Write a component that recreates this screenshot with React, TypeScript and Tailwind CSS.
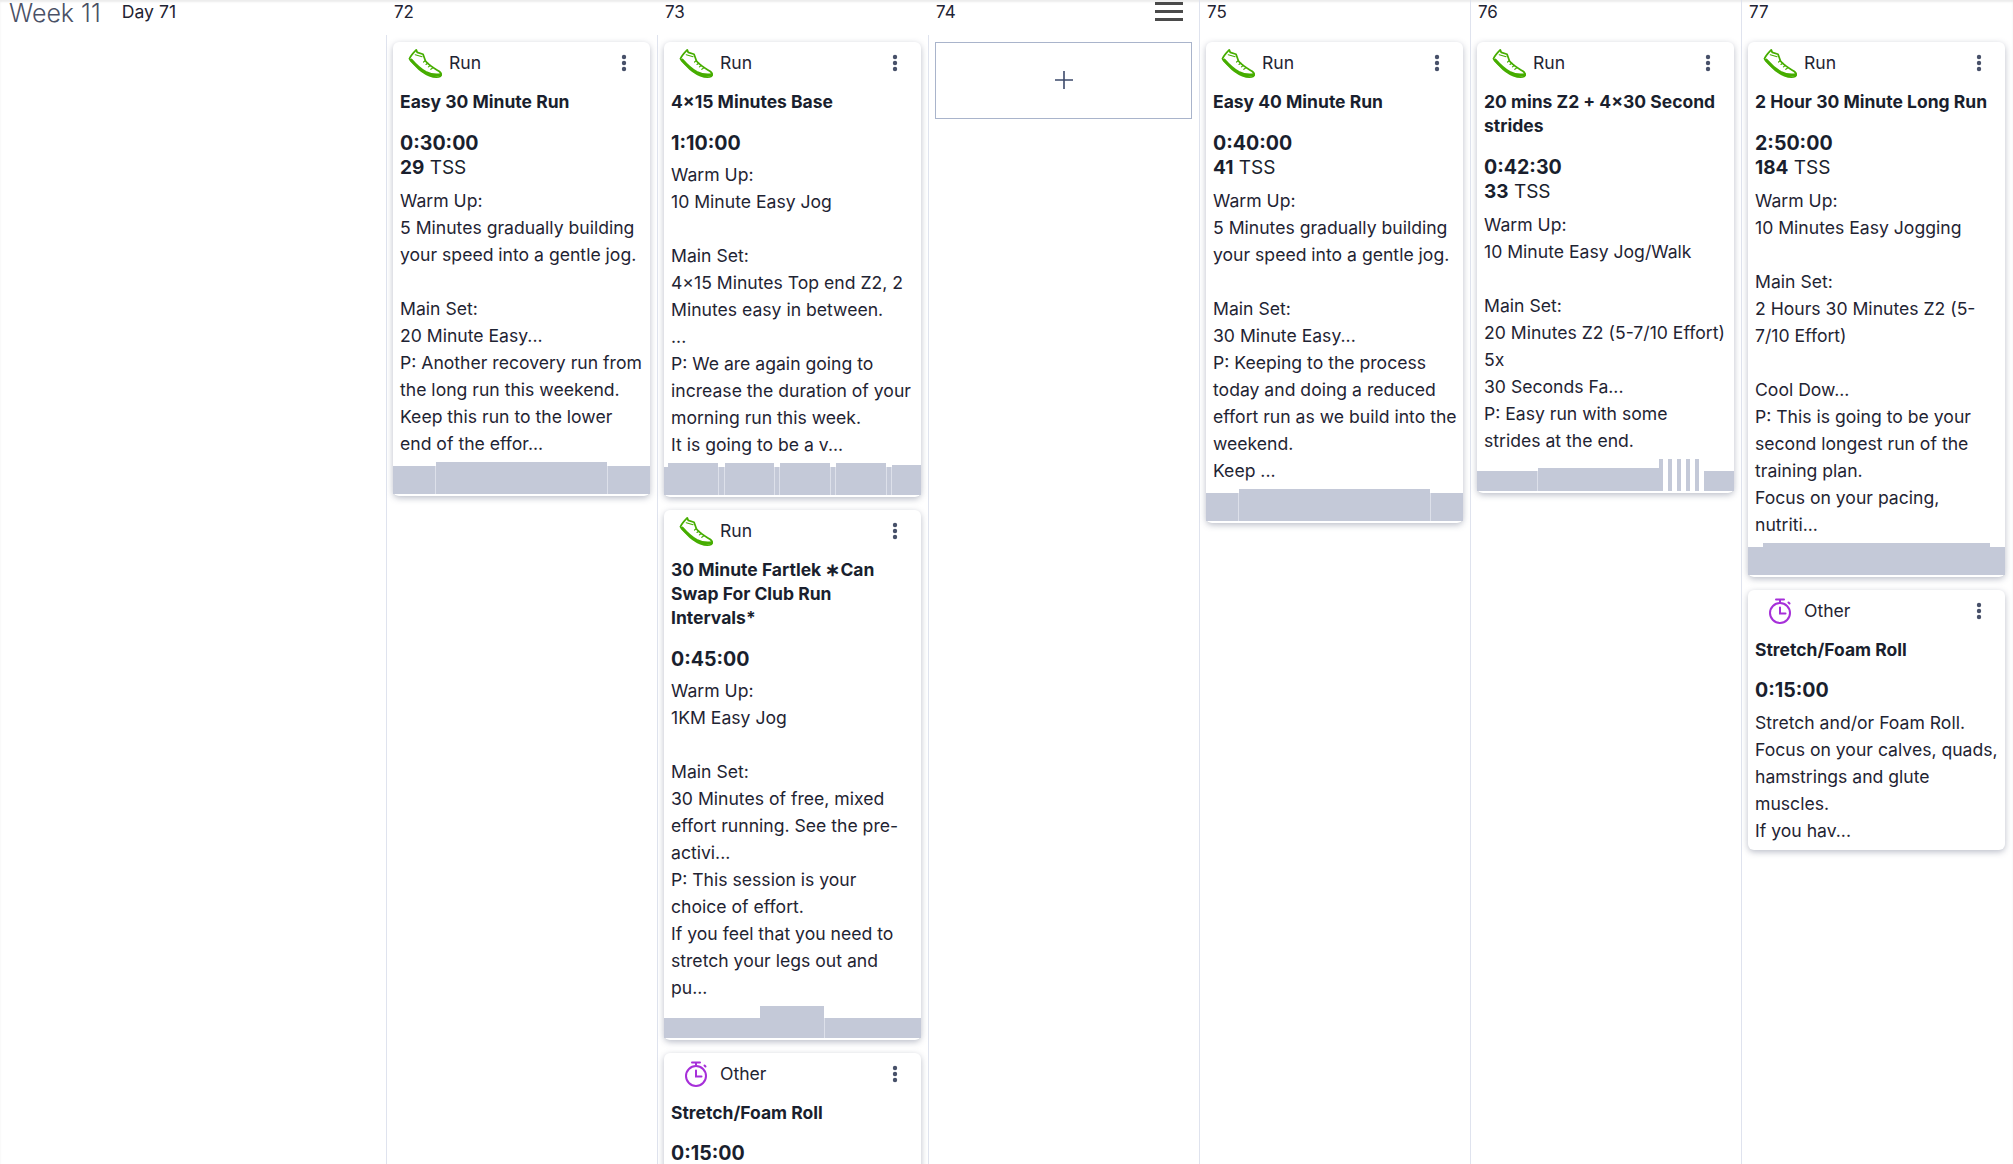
const FONT = "font-['Inter','Noto_Sans',sans-serif]";

type Seg = [number, number, boolean?];

function Shoe() {
  return (
    <svg width="35" height="31" viewBox="0 0 35 31" fill="none" stroke="#46ad00" strokeWidth="1.8" strokeLinejoin="round" strokeLinecap="round">
      <path d="M8.5 1.5 L9.5 4 L15.5 6 L18 13 C22 18 28 21 32 23.5 C34 25 34.5 27 33.5 28.5 C31 30 26 29.5 22 28 C17 26 12 22.5 8 18 C5 15 2 12.5 1.5 10.5 C3 7 6 4 8.5 1.5 Z" />
      <path d="M3.5 12 C7 16 12 21 18 24.5 C23 27 28 28 33.5 27" strokeWidth="3" />
      <path d="M7.5 6.5 L14.5 8.5" strokeWidth="1.2" />
      <path d="M18 12.5 L16 14 M20.5 15 L18.5 16.5 M23 17.5 L21 19 M25.5 20 L23.5 21.5" strokeWidth="1.2" />
    </svg>
  );
}

function Stopwatch() {
  return (
    <svg width="24" height="26" viewBox="0 0 24 26" fill="none" stroke="#a62fd9" strokeWidth="2" strokeLinecap="round">
      <circle cx="12" cy="15" r="10" />
      <path d="M8 1.5 H16 M12 1.5 V5 M12 9.5 V15.5 H17.5 M20.5 4.5 L21.5 5.5" />
    </svg>
  );
}

function Dots() {
  return (
    <svg width="6" height="18" viewBox="0 0 6 18" fill="#475069" className="shrink-0">
      <circle cx="3" cy="3" r="2.2" />
      <circle cx="3" cy="9" r="2.2" />
      <circle cx="3" cy="15" r="2.2" />
    </svg>
  );
}

function Chart({ segs }: { segs: Seg[] }) {
  return (
    <div className="mt-[5px] flex h-8 items-end">
      {segs.map(([w, h, light], i) => (
        <div
          key={i}
          className={light ? "shrink-0 bg-[#dde0ea]" : "shrink-0 bg-[#c4c9d8]"}
          style={{ width: w, height: h }}
        />
      ))}
    </div>
  );
}

function Card({
  kind = "Run",
  title,
  time,
  tss,
  body,
  segs,
}: {
  kind?: string;
  title: string;
  time: string;
  tss?: string;
  body: string;
  segs?: Seg[];
}) {
  const other = kind === "Other";
  return (
    <div className="w-[257px] shrink-0 rounded-md bg-white pb-[2px] shadow-[0_2px_6px_rgba(60,70,100,0.35)]">
      <div className="mb-[8px] flex h-[40px] items-center pt-[2px] pr-[23px]">
        <div className="mr-[7px] ml-[15px] flex w-[34px] justify-center">
          {other ? <Stopwatch /> : <Shoe />}
        </div>
        <span className="flex-1 text-[17.6px] text-[#1f2433]">{kind}</span>
        <Dots />
      </div>
      <div className="pr-[4px] pl-[7px]">
        <div className="text-[17.5px] leading-6 font-bold text-[#1a1f2e]">{title}</div>
        <div className={other ? "mt-[16px] text-[19.6px] leading-[25px] font-bold text-[#1a1f2e]" : "mt-[17px] text-[19.6px] leading-[25px] font-bold text-[#1a1f2e]"}>{time}</div>
        {tss && (
          <div className="-mt-px text-[19px] leading-[25px] text-[#1a1f2e]">
            <span className="font-bold">{tss}</span> TSS
          </div>
        )}
        <div className={tss ? "mt-[7px] text-[17.6px] leading-[27px] whitespace-pre-line text-[#1f2433]" : other ? "mt-[6px] text-[17.6px] leading-[27px] whitespace-pre-line text-[#1f2433]" : "mt-[5px] text-[17.6px] leading-[27px] whitespace-pre-line text-[#1f2433]"}>{body}</div>
      </div>
      {segs ? <Chart segs={segs} /> : <div className="h-[4px]" />}
    </div>
  );
}

function Column({
  day,
  menu,
  fullLine,
  children,
}: {
  day: string;
  menu?: boolean;
  fullLine?: boolean;
  children: React.ReactNode;
}) {
  return (
    <div className={fullLine ? "flex w-[271px] shrink-0 flex-col border-l border-[#dfe3ee]" : "flex w-[271px] shrink-0 flex-col pl-px"}>
      <div className="flex h-[35px] shrink-0 items-start justify-between pt-[2px] pl-[7px] text-[17px] leading-5 text-[#1f2433]">
        <span>{day}</span>
        {menu && (
          <div className="mr-[16px] flex flex-col gap-[5px]">
            <div className="h-[3px] w-7 bg-[#4a4a4a]" />
            <div className="h-[3px] w-7 bg-[#4a4a4a]" />
            <div className="h-[3px] w-7 bg-[#4a4a4a]" />
          </div>
        )}
      </div>
      <div
        className={
          fullLine
            ? "flex flex-1 flex-col gap-[13px] px-[6px] pt-[7px]"
            : "-ml-px flex flex-1 flex-col gap-[13px] border-l border-[#dfe3ee] px-[6px] pt-[7px]"
        }
      >
        {children}
      </div>
    </div>
  );
}

export default function App() {
  return (
    <div className={`flex h-[1164px] w-[2013px] overflow-hidden bg-white shadow-[inset_0_2px_2px_rgba(0,0,0,0.08)] ${FONT}`}>
      <div className="flex w-[386px] shrink-0 items-start pl-[9px]">
        <span className="pt-[1px] text-[25px] leading-[25px] font-light text-[#4a5166]">Week 11</span>
        <span className="ml-[21px] pt-[2px] text-[17.6px] leading-5 text-[#1f2433]">Day 71</span>
      </div>
      <Column day="72">
        <Card
          title="Easy 30 Minute Run"
          time="0:30:00"
          tss="29"
          body={"Warm Up:\n5 Minutes gradually building your speed into a gentle jog.\n\nMain Set:\n20 Minute Easy...\nP: Another recovery run from the long run this weekend.\nKeep this run to the lower end of the effor..."}
          segs={[[42, 28], [1, 28, true], [171, 32], [1, 28, true], [42, 28]]}
        />
      </Column>
      <Column day="73">
        <Card
          title="4×15 Minutes Base"
          time="1:10:00"
          body={"Warm Up:\n10 Minute Easy Jog\n\nMain Set:\n4×15 Minutes Top end Z2, 2 Minutes easy in between.\n...\nP: We are again going to increase the duration of your morning run this week.\nIt is going to be a v..."}
          segs={[[4, 28], [50, 32], [1, 28, true], [5, 28], [1, 28, true], [49, 32], [1, 28, true], [4, 28], [1, 28, true], [50, 32], [1, 28, true], [4, 28], [1, 28, true], [50, 32], [1, 28, true], [4, 28], [1, 28, true], [29, 30]]}
        />
        <Card
          title="30 Minute Fartlek ∗Can Swap For Club Run Intervals*"
          time="0:45:00"
          body={"Warm Up:\n1KM Easy Jog\n\nMain Set:\n30 Minutes of free, mixed effort running. See the pre-activi...\nP: This session is your\nchoice of effort.\nIf you feel that you need to stretch your legs out and pu..."}
          segs={[[96, 20], [64, 32], [1, 20, true], [96, 20]]}
        />
        <Card
          kind="Other"
          title="Stretch/Foam Roll"
          time="0:15:00"
          body={"Stretch and/or Foam Roll."}
        />
      </Column>
      <Column day="74" menu>
        <div className="flex h-[77px] w-[257px] items-center justify-center border border-[#a9b4cb] pb-px">
          <svg width="20" height="20" viewBox="0 0 20 20" stroke="#3d4a6b" strokeWidth="1.6">
            <path d="M10 1 V19 M1 10 H19" />
          </svg>
        </div>
      </Column>
      <Column day="75" fullLine>
        <Card
          title="Easy 40 Minute Run"
          time="0:40:00"
          tss="41"
          body={"Warm Up:\n5 Minutes gradually building your speed into a gentle jog.\n\nMain Set:\n30 Minute Easy...\nP: Keeping to the process today and doing a reduced effort run as we build into the weekend.\nKeep ..."}
          segs={[[32, 28], [1, 28, true], [191, 32], [1, 28, true], [32, 28]]}
        />
      </Column>
      <Column day="76" fullLine>
        <Card
          title="20 mins Z2 + 4×30 Second strides"
          time="0:42:30"
          tss="33"
          body={"Warm Up:\n10 Minute Easy Jog/Walk\n\nMain Set:\n20 Minutes Z2 (5-7/10 Effort)\n5x\n30 Seconds Fa...\nP: Easy run with some\nstrides at the end."}
          segs={[[60, 20], [1, 20, true], [121, 23], [4, 32], [5, 0], [4, 32], [5, 0], [4, 32], [5, 0], [4, 32], [5, 0], [4, 32], [5, 0], [30, 20]]}
        />
      </Column>
      <Column day="77" fullLine>
        <Card
          title="2 Hour 30 Minute Long Run"
          time="2:50:00"
          tss="184"
          body={"Warm Up:\n10 Minutes Easy Jogging\n\nMain Set:\n2 Hours 30 Minutes Z2 (5-7/10 Effort)\n\nCool Dow...\nP: This is going to be your second longest run of the training plan.\nFocus on your pacing, nutriti..."}
          segs={[[15, 28], [227, 32], [15, 28]]}
        />
        <Card
          kind="Other"
          title="Stretch/Foam Roll"
          time="0:15:00"
          body={"Stretch and/or Foam Roll.\nFocus on your calves, quads, hamstrings and glute muscles.\nIf you hav..."}
        />
      </Column>
    </div>
  );
}
